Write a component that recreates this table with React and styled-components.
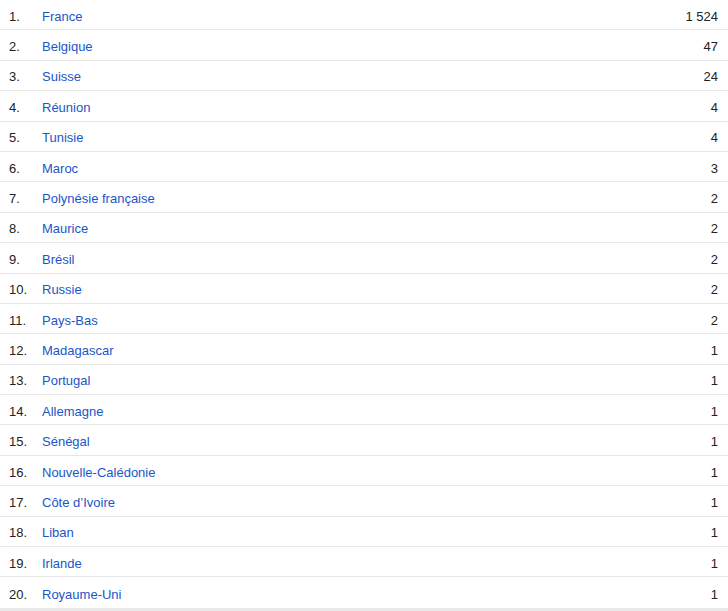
import { createGlobalStyle } from "styled-components";
import styled from "styled-components";

const GlobalStyle = createGlobalStyle`
  html, body {
    margin: 0;
    padding: 0;
    background: #fff;
  }
  body {
    font-family: "Liberation Sans", Arial, sans-serif;
    font-size: 13px;
  }
`;

const rows = [
  ["France", "1 524"],
  ["Belgique", "47"],
  ["Suisse", "24"],
  ["Réunion", "4"],
  ["Tunisie", "4"],
  ["Maroc", "3"],
  ["Polynésie française", "2"],
  ["Maurice", "2"],
  ["Brésil", "2"],
  ["Russie", "2"],
  ["Pays-Bas", "2"],
  ["Madagascar", "1"],
  ["Portugal", "1"],
  ["Allemagne", "1"],
  ["Sénégal", "1"],
  ["Nouvelle-Calédonie", "1"],
  ["Côte d’Ivoire", "1"],
  ["Liban", "1"],
  ["Irlande", "1"],
  ["Royaume-Uni", "1"],
];

const Table = styled.div`
  width: 728px;
  border-bottom: 3px solid #e8e8e8;
`;

const Row = styled.div`
  display: flex;
  align-items: center;
  height: 30.4px;
  box-sizing: border-box;
  border-bottom: ${(p) => (p.$last ? "none" : "1px solid #e6e6e6")};
  padding: 3px 10px 0 9px;
  color: #222;
`;

const Rank = styled.span`
  width: 33px;
  flex-shrink: 0;
`;

const Country = styled.a`
  flex: 1;
  color: #1a56c8;
  text-decoration: none;
  cursor: pointer;
`;

const Value = styled.span`
  text-align: right;
  color: #222;
`;

export default function App() {
  return (
    <>
      <GlobalStyle />
      <Table>
        {rows.map(([name, value], i) => (
          <Row key={name} $last={i === rows.length - 1}>
            <Rank>{i + 1}.</Rank>
            <Country>{name}</Country>
            <Value>{value}</Value>
          </Row>
        ))}
      </Table>
    </>
  );
}
